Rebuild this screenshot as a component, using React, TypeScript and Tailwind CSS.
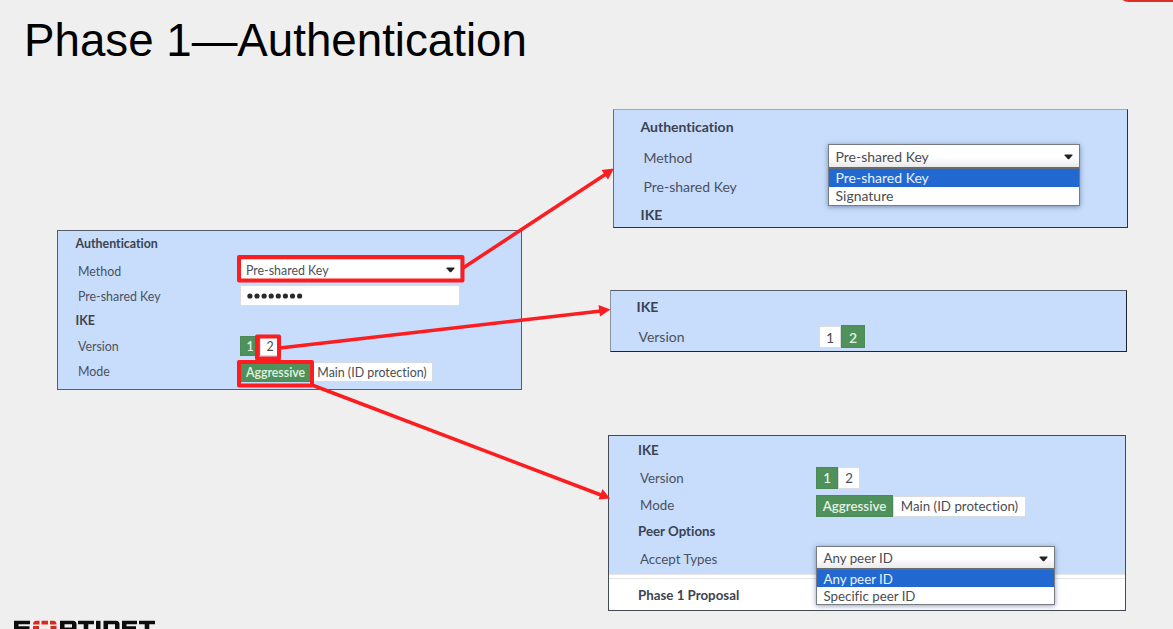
import type { ReactNode } from "react";

const fontLato = "font-['Lato','Open_Sans',sans-serif] [font-variant-ligatures:none]";

function Heading({ className, children }: { className: string; children: ReactNode }) {
  return <div className={`flex items-center font-bold text-[#3b4350] ${className}`}>{children}</div>;
}

function Field({
  className,
  labelClass,
  label,
  children,
}: {
  className: string;
  labelClass: string;
  label: string;
  children?: ReactNode;
}) {
  return (
    <div className={`flex ${className}`}>
      <div className={`shrink-0 ${labelClass}`}>{label}</div>
      {children}
    </div>
  );
}

function Toggle({ active, className, children }: { active?: boolean; className: string; children: ReactNode }) {
  return (
    <div
      className={`flex items-center justify-center border pt-[2px] whitespace-nowrap ${
        active
          ? "border-[#4b8a56] bg-[#4f915b] font-semibold text-[#e6f1e6]"
          : "border-[#d8dbe0] bg-white text-[#4a4d52]"
      } ${className}`}
    >
      {children}
    </div>
  );
}

function Caret() {
  return (
    <svg className="h-[6px] w-[9px]" viewBox="0 0 9 6">
      <path d="M1 .5h7q1 .3.4 1L5.3 5q-.8.7-1.6 0L.6 1.500Q0 .8 1 .5z" fill="#222" />
    </svg>
  );
}

function OpenSelect({
  className,
  value,
  options,
  boxClass,
  optionClass,
}: {
  className: string;
  value: string;
  options: string[];
  boxClass: string;
  optionClass: string;
}) {
  return (
    <div
      className={`relative z-10 flex flex-col self-start border border-[#777b82] bg-white text-[#4a4d52] shadow-[0_1px_5px_rgba(40,60,100,0.5)] ${className}`}
    >
      <div
        className={`flex items-center justify-between border-b-2 border-[#666b73] bg-linear-to-b from-white from-55% to-[#e9e9ea] pr-[6px] pl-[6.500px] ${boxClass}`}
      >
        <span>{value}</span>
        <Caret />
      </div>
      {options.map((option, i) => (
        <div
          key={option}
          className={`flex items-center pl-[6.500px] ${i === 0 ? "bg-[#2169d1] text-[#e9f1ff]" : "bg-white"} ${optionClass}`}
        >
          {option}
        </div>
      ))}
    </div>
  );
}

function SourcePanel() {
  return (
    <section className="absolute top-[230px] left-[57px] flex h-[160px] w-[465px] flex-col border border-[#555d6b] bg-[#c8dcfb] pl-[17.500px] text-[12.400px] leading-none text-[#4a5260]">
      <Heading className="h-[26px]">Authentication</Heading>
      <Field className="h-[26px] items-center" labelClass="w-[164.500px] pl-[2.500px] pt-[4px]" label="Method">
        <div className="flex h-[21px] w-[220px] items-center justify-between bg-white pr-[5px] pl-[6px]">
          <span className="pt-[3px]">Pre-shared Key</span>
          <Caret />
        </div>
      </Field>
      <Field className="h-[25px] items-center" labelClass="w-[164.500px] pl-[2.500px] pt-[3px]" label="Pre-shared Key">
        <div className="flex h-[21px] w-[220px] items-center border border-[#d8dbe0] bg-white pl-[6px]">
          <svg className="h-[6px] w-[56px]" viewBox="0 0 56 6">
            {[0, 1, 2, 3, 4, 5, 6, 7].map((n) => (
              <circle key={n} cx={2.9 + n * 7.1} cy="3" r="2.6" fill="#2a2a2e" />
            ))}
          </svg>
        </div>
      </Field>
      <Heading className="h-[25px] pt-[2px]">IKE</Heading>
      <Field className="h-[26px] items-center" labelClass="w-[164.500px] pl-[2.500px] pt-[2px]" label="Version">
        <Toggle active className="h-[20px] w-[20px]">1</Toggle>
        <Toggle className="h-[20px] w-[20px]">2</Toggle>
      </Field>
      <Field className="h-[26px] items-center" labelClass="w-[164.500px] pl-[2.500px]" label="Mode">
        <Toggle active className="h-[20px] w-[71px] pt-[3px]">Aggressive</Toggle>
        <Toggle className="h-[20px] w-[122px] pt-[3px]">Main (ID protection)</Toggle>
      </Field>
    </section>
  );
}

function MethodPanel() {
  return (
    <section className="absolute top-[109px] left-[613px] flex h-[119px] w-[515px] flex-col border border-[#2e333c] border-t-[#a5a8ad] border-l-[#666b75] bg-[#c8dcfb] pl-[26.500px] text-[14px] leading-none text-[#4a5260]">
      <Heading className="h-[33px]">Authentication</Heading>
      <Field className="h-[30px] items-start" labelClass="w-[187.500px] pl-[3px] pt-[8px]" label="Method">
        <OpenSelect
          className="mt-[1px] w-[252px]"
          value="Pre-shared Key"
          options={["Pre-shared Key", "Signature"]}
          boxClass="h-[24px] pt-[2px]"
          optionClass="h-[18px]"
        />
      </Field>
      <Field className="h-[29px] items-center" labelClass="w-[187px] pl-[3px] -mt-[1px]" label="Pre-shared Key" />
      <Heading className="h-[25px]">IKE</Heading>
    </section>
  );
}

function VersionPanel() {
  return (
    <section className="absolute top-[290px] left-[610px] flex h-[62px] w-[517px] flex-col border border-[#20242b] border-t-[#555d6b] border-l-[#8b9099] bg-[#c8dcfb] pl-[25.500px] text-[14px] leading-none text-[#4a5260]">
      <Heading className="h-[33px] pb-[1px]">IKE</Heading>
      <Field className="h-[25px] items-center" labelClass="w-[182.500px] pl-[2px]" label="Version">
        <Toggle className="h-[22px] w-[22px]">1</Toggle>
        <Toggle active className="h-[23px] w-[24px]">2</Toggle>
      </Field>
    </section>
  );
}

function AggressivePanel() {
  return (
    <section className="absolute top-[435px] left-[608px] flex h-[176px] w-[518px] flex-col border border-[#444a55] bg-white text-[13.300px] leading-none text-[#4a5260]">
      <div className="flex h-[138px] flex-col bg-[#c8dcfb] pl-[29px]">
        <Heading className="h-[28px] pt-[1px]">IKE</Heading>
        <Field className="h-[28px] items-center" labelClass="w-[178px] pl-[2px] pt-[1px]" label="Version">
          <Toggle active className="h-[22px] w-[22px]">1</Toggle>
          <Toggle className="h-[22px] w-[22px]">2</Toggle>
        </Field>
        <Field className="h-[28px] items-center" labelClass="w-[178px] pl-[2px]" label="Mode">
          <Toggle active className="h-[22px] w-[77px]">Aggressive</Toggle>
          <Toggle className="h-[21px] w-[133px]">Main (ID protection)</Toggle>
        </Field>
        <Heading className="h-[24px]">Peer Options</Heading>
        <Field className="h-[30px] items-center" labelClass="w-[178px] pl-[2px] pt-[2px]" label="Accept Types">
          <OpenSelect
            className="mt-[2px] w-[239px]"
            value="Any peer ID"
            options={["Any peer ID", "Specific peer ID"]}
            boxClass="h-[23px] pt-[3px]"
            optionClass="h-[17px] pt-[2px]"
          />
        </Field>
      </div>
      <div className="h-[5px] border-y border-[#e6e6e6] bg-white" />
      <Heading className="h-[31px] pt-[2px] pl-[29px]">Phase 1 Proposal</Heading>
    </section>
  );
}

function Annotations() {
  return (
    <svg className="pointer-events-none absolute inset-0 z-20 h-[629px] w-[1173px]" viewBox="0 0 1173 629">
      <g fill="none" stroke="#fb1d1f" strokeWidth="4" strokeLinejoin="round">
        <rect x="239" y="257" width="223.500" height="23.500" />
        <rect x="257" y="336.500" width="22" height="22" />
        <rect x="239" y="362" width="73" height="23.500" />
        <g strokeWidth="3.500">
          <path d="M463 268L606 174" />
          <path d="M280 348L601 311" />
          <path d="M312 385L601 495" />
        </g>
      </g>
      <g fill="#fb1d1f">
        <path d="M614 168.500L601.500 170L608 179.500Z" />
        <path d="M610.500 309.500L598.500 305L600 316.500Z" />
        <path d="M610 498.500L602.500 489L598.500 499.500Z" />
      </g>
    </svg>
  );
}

function BrandMark() {
  return (
    <svg className="absolute bottom-0 left-[14px] h-[9px] w-[142px]" viewBox="0 0 142 9">
      <g fill="#0c0c0c">
        <path d="M0 .8h16v3.400H4.500v2h11V9H0z" />
        <path d="M46 .8h13q3.500 0 3.500 3.500V9H58V4.200h-7.500V9H46z" />
        <path d="M50 7.500h9V9h-9z" />
        <path d="M64 .8h16v3.400h-5.700V9h-4.600V4.200H64z" />
        <path d="M82 .8h4.500V9H82z" />
        <path d="M89.500.8h12.500q3.500 0 3.500 3.500V9H101V4.200h-7V9h-4.500z" />
        <path d="M108 .8h15v3.400h-10.500v2H122V9h-14z" />
        <path d="M125 .8h16v3.400h-5.700V9h-4.600V4.200H125z" />
      </g>
      <path
        fill="#da291c"
        d="M22.500.8H25.500V4.600H19Q19 .8 22.500.8zM27.500.8h6.500v3.800h-6.500zM36 .8h3.500q3 0 3 3.800H36zM19 6h6v3h-6zM36.500 6h6v3h-6z"
      />
    </svg>
  );
}

export default function App() {
  return (
    <main className={`relative h-[629px] w-[1173px] overflow-hidden bg-[#efefef] ${fontLato}`}>
      <h1 className="pt-[15px] pl-[24px] font-['Liberation_Sans',Arial,sans-serif] text-[45.700px] leading-[52px] whitespace-nowrap text-black">
        Phase 1—Authentication
      </h1>
      <div className="absolute top-[-18px] right-[-20px] h-[20px] w-[76px] rounded-bl-[12px] bg-[#dc2d27]" />
      <SourcePanel />
      <MethodPanel />
      <VersionPanel />
      <AggressivePanel />
      <Annotations />
      <BrandMark />
    </main>
  );
}
